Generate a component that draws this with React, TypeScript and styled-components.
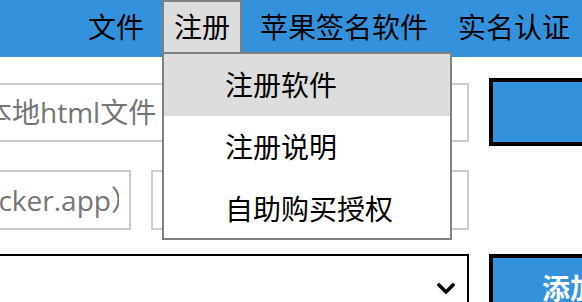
import React from "react";
import styled, { createGlobalStyle } from "styled-components";

const GlobalStyle = createGlobalStyle`
  html, body { margin: 0; padding: 0; background: #ffffff; overflow: hidden; }
  body {
    font-family: "Open Sans", "Noto Sans CJK SC", sans-serif;
    font-size: 28px;
    color: #000000;
  }
  * { box-sizing: border-box; }
`;

const MenuBar = styled.nav`
  position: relative;
  z-index: 5;
  height: 57px;
  background: #3392db;
  display: flex;
  justify-content: flex-end;
  align-items: flex-start;
  gap: 6px;
`;

const MenuItem = styled.div<{ $active?: boolean }>`
  position: relative;
  height: 54px;
  padding: 0 10px;
  border: 2px solid ${(p) => (p.$active ? "#808080" : "transparent")};
  background: ${(p) => (p.$active ? "#dddddd" : "transparent")};
  display: flex;
  align-items: center;
  line-height: 1;
  white-space: nowrap;
  cursor: default;
`;

const Dropdown = styled.div`
  position: absolute;
  left: -2px;
  top: 100%;
  width: 290px;
  height: 188px;
  overflow: hidden;
  border: 2px solid #808080;
  background: #ffffff;
  display: flex;
  flex-direction: column;
`;

const DropItem = styled.div<{ $hover?: boolean }>`
  flex: 0 0 62px;
  display: flex;
  align-items: center;
  padding-left: 61px;
  line-height: 1;
  white-space: nowrap;
  background: ${(p) => (p.$hover ? "#dddddd" : "transparent")};
`;

const Main = styled.main`
  margin-left: -112px;
  padding-top: 21px;
  display: flex;
  flex-direction: column;
  gap: 24px;
`;

const Row = styled.div`
  display: flex;
  align-items: center;
  gap: 20px;
`;

const TextInput = styled.input<{ $w: number }>`
  flex: 0 0 ${(p) => p.$w}px;
  width: ${(p) => p.$w}px;
  height: ${(p) => (p.$w > 500 ? 59 : 60)}px;
  border: 2px solid #cccccc;
  padding: 0 10px;
  font-family: inherit;
  font-size: 28px;
  color: #000000;
  background: #ffffff;
  outline: none;
  &::placeholder { color: #757575; }
`;

const InputPair = styled.div`
  display: flex;
  gap: 20px;
`;

const SelectBox = styled.div`
  flex: 0 0 581px;
  height: 68px;
  border: 2px solid #000000;
  display: flex;
  align-items: center;
  justify-content: flex-end;
  padding-right: 12px;
  background: #ffffff;
`;

const ActionButton = styled.button`
  flex: 0 0 162px;
  height: 68px;
  border: 4px solid #000000;
  background: #3392db;
  color: #ffffff;
  font-family: inherit;
  font-size: 28px;
  font-weight: bold;
  line-height: 1;
  padding: 0;
  text-align: center;
  white-space: nowrap;
`;

const Chevron = () => (
  <svg width="18" height="11" viewBox="0 0 18 11" aria-hidden="true">
    <polyline
      points="2,2 9,9 16,2"
      fill="none"
      stroke="#000"
      strokeWidth="3.4"
      strokeLinecap="square"
    />
  </svg>
);

export default function App() {
  return (
    <>
      <GlobalStyle />
      <MenuBar>
        <MenuItem>文件</MenuItem>
        <MenuItem $active>
          注册
          <Dropdown>
            <DropItem $hover>注册软件</DropItem>
            <DropItem>注册说明</DropItem>
            <DropItem>自助购买授权</DropItem>
          </Dropdown>
        </MenuItem>
        <MenuItem>苹果签名软件</MenuItem>
        <MenuItem>实名认证</MenuItem>
      </MenuBar>
      <Main>
        <Row>
          <TextInput $w={581} placeholder="请选择本地html文件" />
          <ActionButton aria-label="选择文件" />
        </Row>
        <Row>
          <InputPair>
            <TextInput $w={243} placeholder="（如Tracker.app）" />
            <TextInput $w={318} placeholder="" />
          </InputPair>
        </Row>
        <Row>
          <SelectBox>
            <Chevron />
          </SelectBox>
          <ActionButton>添加</ActionButton>
        </Row>
      </Main>
    </>
  );
}
